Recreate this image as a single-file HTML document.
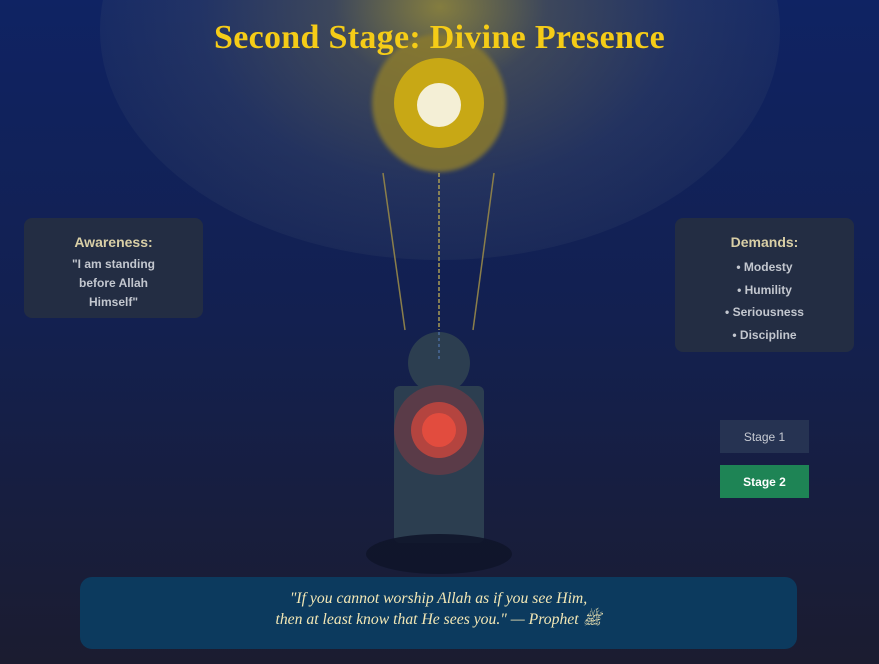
<!DOCTYPE html>
<html><head><meta charset="utf-8"><style>
html,body{margin:0;padding:0}
body{width:879px;height:664px;overflow:hidden;position:relative;background:linear-gradient(180deg,#0f2363 0%,#13204f 50%,#1b1c30 100%);font-family:"Liberation Sans",sans-serif}
.glow{position:absolute;left:100px;top:-200px;width:680px;height:460px;border-radius:50%;background:radial-gradient(ellipse at 50% 45%,rgba(210,185,40,0.6) 0%,rgba(130,125,80,0.4) 22%,rgba(90,100,110,0.25) 50%,rgba(60,80,120,0.1) 80%,rgba(40,60,120,0) 100%)}
h1{position:absolute;top:19px;left:0;width:879px;margin:0;text-align:center;font-family:"Liberation Serif",serif;font-weight:bold;font-size:34px;letter-spacing:0.3px;color:#f5cc17}
.box{position:absolute;background:#232d43;border-radius:8px;text-align:center;color:#c3c7cf;font-size:12px;font-weight:bold}
.box h3{margin:0;color:#d9cfa6;font-size:14px;padding-top:16px;padding-bottom:5px}
.btn{position:absolute;left:720px;width:89px;height:33px;line-height:35px;text-align:center;font-size:12px}
.quote{position:absolute;left:80px;top:577px;width:717px;height:72px;background:#0c3a5e;border-radius:12px;text-align:center;font-family:"Liberation Serif",serif;font-style:italic;color:#f2e7b5;font-size:15.7px;line-height:21px;padding-top:11px;box-sizing:border-box}
</style></head><body>
<div class="glow"></div>
<svg width="879" height="664" style="position:absolute;left:0;top:0">
<defs><filter id="b"><feGaussianBlur stdDeviation="2"/></filter></defs>
<ellipse cx="439" cy="103" rx="67" ry="69" fill="#8a7a2e" opacity="0.85" filter="url(#b)"/>
<ellipse cx="439" cy="103" rx="45" ry="45" fill="#c8a815"/>
<ellipse cx="439" cy="105" rx="22" ry="22" fill="#f4efd6"/>
<line x1="383" y1="173" x2="405" y2="330" stroke="#8a7e4a" stroke-width="1.5"/>
<line x1="494" y1="173" x2="473" y2="330" stroke="#8a7e4a" stroke-width="1.5"/>
<line x1="439" y1="173" x2="439" y2="330" stroke="#a89b55" stroke-width="1.5" stroke-dasharray="4,2"/>
<circle cx="439" cy="363" r="31" fill="#2c3e50"/>
<line x1="439" y1="332" x2="439" y2="362" stroke="#4a6a9a" stroke-width="1.5" stroke-dasharray="3,3"/>
<rect x="394" y="386" width="90" height="157" rx="6" fill="#2c3e50"/>
<circle cx="439" cy="430" r="45" fill="#7a3b43" opacity="0.6"/>
<circle cx="439" cy="430" r="28" fill="#b4443f"/>
<circle cx="439" cy="430" r="17" fill="#e24c3e"/>
<ellipse cx="439" cy="554" rx="73" ry="20" fill="#10152a" opacity="0.9"/>
</svg>
<h1>Second Stage: Divine Presence</h1>
<div class="box" style="left:24px;top:218px;width:179px;height:100px;line-height:19px"><h3 style="line-height:16px">Awareness:</h3>"I am standing<br>before Allah<br>Himself"</div>
<div class="box" style="left:675px;top:218px;width:179px;height:134px;line-height:22.7px"><h3 style="line-height:16px;padding-bottom:6px">Demands:</h3>• Modesty<br>• Humility<br>• Seriousness<br>• Discipline</div>
<div class="btn" style="top:420px;background:#263352;color:#c7cbd3">Stage 1</div>
<div class="btn" style="top:465px;background:#1e8455;color:#fff;font-weight:bold">Stage 2</div>
<div class="quote">"If you cannot worship Allah as if you see Him,<br>then at least know that He sees you." — Prophet ﷺ</div>
</body></html>
